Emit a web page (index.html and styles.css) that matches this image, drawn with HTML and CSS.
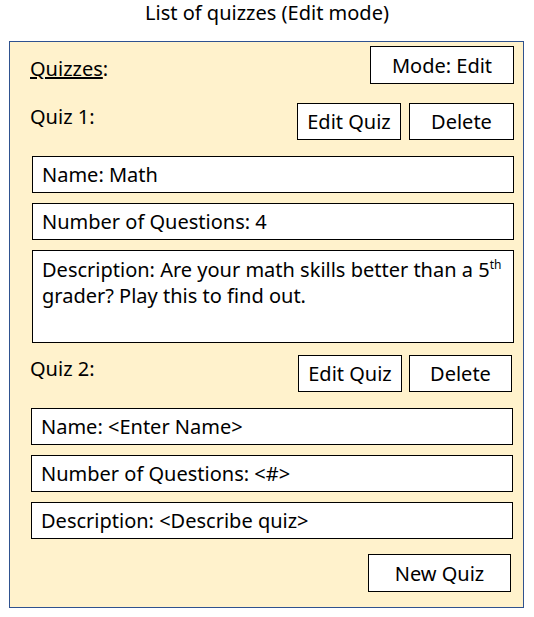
FILE: index.html
```html
<!DOCTYPE html>
<html>
<head>
<meta charset="utf-8">
<link rel="stylesheet" href="styles.css">
</head>
<body>
<h1 class="title">List of quizzes (Edit mode)</h1>
<div class="panel">
  <div class="row head-row">
    <span class="label label-main"><u>Quizzes</u>:</span>
    <div class="btn btn-mode">Mode: Edit</div>
  </div>

  <div class="row quiz-row">
    <span class="label label-quiz">Quiz 1:</span>
    <div class="btns">
      <div class="btn btn-edit">Edit Quiz</div>
      <div class="btn btn-del">Delete</div>
    </div>
  </div>
  <div class="fields">
    <div class="field">Name: Math</div>
    <div class="field">Number of Questions: 4</div>
    <div class="field field-desc">Description: Are your math skills better than a 5<sup>th</sup> grader? Play this to find out.</div>
  </div>

  <div class="row quiz-row quiz-row-2">
    <span class="label label-quiz">Quiz 2:</span>
    <div class="btns">
      <div class="btn btn-edit">Edit Quiz</div>
      <div class="btn btn-del">Delete</div>
    </div>
  </div>
  <div class="fields fields-2">
    <div class="field">Name: &lt;Enter Name&gt;</div>
    <div class="field">Number of Questions: &lt;#&gt;</div>
    <div class="field">Description: &lt;Describe quiz&gt;</div>
  </div>

  <div class="row foot-row">
    <div class="btn btn-new">New Quiz</div>
  </div>
</div>
</body>
</html>
```

FILE: styles.css
```css
html, body {
  margin: 0;
  padding: 0;
  background: #ffffff;
}
body {
  font-family: "Noto Sans", "Open Sans", sans-serif;
  font-size: 20px;
  color: #000;
  width: 534px;
}
.title {
  margin: 0;
  height: 41px;
  padding-top: 0;
  box-sizing: border-box;
  text-align: center;
  font-size: 20px;
  font-weight: normal;
  line-height: 26px;
}
.panel {
  margin-left: 9px;
  width: 515px;
  height: 567px;
  box-sizing: border-box;
  background: #fff2cc;
  border: 1px solid #2f528f;
  padding: 4px 9px 0 20px;
  display: flex;
  flex-direction: column;
}
.row {
  display: flex;
  justify-content: space-between;
  align-items: flex-start;
}
.head-row {
  height: 38px;
}
.label {
  line-height: 26px;
}
.label-main {
  padding-top: 10px;
}
.label-quiz {
  padding-top: 1px;
}
.btn {
  box-sizing: border-box;
  border: 1px solid #000;
  background: #fff;
  display: flex;
  align-items: center;
  justify-content: center;
  height: 37px;
}
.btn-mode {
  width: 144px;
  height: 38px;
}
.quiz-row {
  margin-top: 19px;
}
.quiz-row-2 {
  margin-top: 12px;
  padding-right: 2px;
}
.quiz-row-2 .btn-del {
  width: 103px;
}
.quiz-row-2 .btns {
  gap: 7px;
}
.btns {
  display: flex;
  gap: 8px;
}
.btn-edit {
  width: 104px;
}
.btn-del {
  width: 105px;
}
.fields {
  margin-top: 16px;
  margin-left: 2px;
  display: flex;
  flex-direction: column;
  gap: 10px;
}
.fields-2 {
  margin-left: 1px;
  margin-right: 1px;
}
.field {
  box-sizing: border-box;
  border: 1px solid #000;
  background: #fff;
  height: 37px;
  padding: 0 9px;
  line-height: 35px;
}
.field-desc {
  height: 93px;
  line-height: 26px;
  padding-top: 6px;
}
.field-desc sup {
  font-size: 12px;
  line-height: 0;
  vertical-align: 8px;
}
.foot-row {
  margin-top: 15px;
  justify-content: flex-end;
  padding-right: 3px;
}
.btn-new {
  width: 143px;
  height: 38px;
}
```
